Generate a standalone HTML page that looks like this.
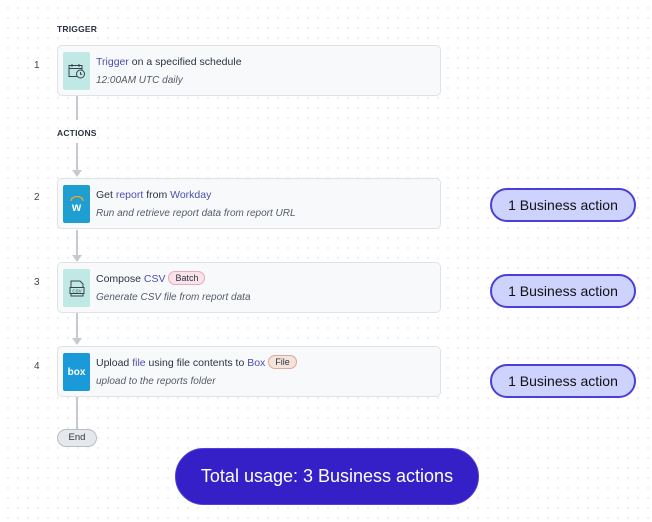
<!DOCTYPE html>
<html><head><meta charset="utf-8"><style>
*{margin:0;padding:0;box-sizing:border-box}
body{width:652px;height:522px;position:relative;overflow:hidden;background-color:#fff;background-image:radial-gradient(circle,#e8eaee 0.8px,transparent 1.1px);background-size:10px 10px;background-position:3px 3px;font-family:"Liberation Sans",sans-serif;color:#2b3340}
.lbl{position:absolute;left:57px;font-size:8.5px;font-weight:bold;letter-spacing:.2px;color:#2b3340}
.num{position:absolute;left:34px;font-size:10px;color:#444}
.card{position:absolute;left:57px;width:384px;height:51px;background:#f8f9fb;border:1px solid #dfe2e7;border-radius:5px}
.ic{position:absolute;left:5px;top:6px;width:27px;height:38px;border-radius:2px;display:flex;align-items:center;justify-content:center}
.t1{position:absolute;left:38px;top:10px;font-size:10.5px;color:#2b3340;white-space:nowrap}
.t2{position:absolute;left:38px;top:29px;font-size:10px;font-style:italic;color:#555c66;white-space:nowrap}
.b{color:#4a4fb0}
.tag{display:inline-block;font-size:9px;padding:1px 6px;border-radius:9px;margin-left:3px;vertical-align:1px}
.line{position:absolute;left:76px;width:1.5px;background:#c6cad0}
.arr{position:absolute;left:72px;width:0;height:0;border-left:5px solid transparent;border-right:5px solid transparent;border-top:7px solid #c6cad0}
.ba{position:absolute;left:490px;width:146px;height:34px;border:2px solid #4a3fd6;background:#cdd3fd;border-radius:17px;font-size:14px;color:#111;text-align:center;line-height:30px}
</style></head><body>
<div class="lbl" style="top:24px">TRIGGER</div>
<div class="num" style="top:60px">1</div>
<div class="card" style="top:45px"><div class="ic" style="background:#c0e9e6">
<svg width="18" height="16" viewBox="0 0 18 16" fill="none" stroke="#3a4150" stroke-width="1"><rect x="1" y="2.5" width="13" height="11"/><path d="M1 5.5h13M4 1v3M11 1v3"/><circle cx="12.5" cy="11" r="4" fill="#c0e9e6"/><path d="M12.5 9v2.2h1.6"/></svg></div>
<div class="t1"><span class="b">Trigger</span> on a specified schedule</div><div class="t2">12:00AM UTC daily</div></div>
<div class="line" style="top:96px;height:24px"></div>
<div class="lbl" style="top:128px">ACTIONS</div>
<div class="line" style="top:143px;height:28px"></div><div class="arr" style="top:170px"></div>
<div class="num" style="top:192px">2</div>
<div class="card" style="top:178px"><div class="ic" style="background:#1f9ed2;flex-direction:column">
<svg width="14" height="5" viewBox="0 0 14 5"><path d="M1 5A6 4.5 0 0 1 13 5" fill="none" stroke="#f5a623" stroke-width="1.3"/></svg>
<span style="color:#fff;font-size:12px;font-weight:bold;line-height:12px">w</span></div>
<div class="t1">Get <span class="b">report</span> from <span class="b">Workday</span></div><div class="t2">Run and retrieve report data from report URL</div></div>
<div class="line" style="top:230px;height:25px"></div><div class="arr" style="top:255px"></div>
<div class="num" style="top:277px">3</div>
<div class="card" style="top:262px"><div class="ic" style="background:#c0e9e6">
<svg width="16" height="17" viewBox="0 0 16 17" fill="none" stroke="#3a4150" stroke-width="1"><path d="M2 7V1h9l3 3v3M2 14v2h12v-2"/><rect x="1" y="7.5" width="14" height="6"/><text x="8" y="12.3" font-size="4.5" text-anchor="middle" fill="#3a4150" stroke="none" font-family="Liberation Sans">CSV</text></svg></div>
<div class="t1" style="top:8px">Compose <span class="b">CSV</span><span class="tag" style="background:#fbe3ea;border:1px solid #e8a9bd">Batch</span></div><div class="t2">Generate CSV file from report data</div></div>
<div class="line" style="top:313px;height:27px"></div><div class="arr" style="top:338px"></div>
<div class="num" style="top:361px">4</div>
<div class="card" style="top:346px"><div class="ic" style="background:#1a9ad8"><span style="color:#fff;font-size:10px;font-weight:bold">box</span></div>
<div class="t1" style="top:8px">Upload <span class="b">file</span> using file contents to <span class="b">Box</span><span class="tag" style="background:#f6e3dc;border:1px solid #d9ab98">File</span></div><div class="t2">upload to the reports folder</div></div>
<div class="line" style="top:397px;height:32px"></div>
<div style="position:absolute;left:57px;top:429px;width:40px;height:18px;background:#e5e8ec;border:1px solid #b8bdc4;border-radius:9px;font-size:9.5px;text-align:center;line-height:16px;color:#333">End</div>
<div class="ba" style="top:188px">1 Business action</div>
<div class="ba" style="top:274px">1 Business action</div>
<div class="ba" style="top:364px">1 Business action</div>
<div style="position:absolute;left:175px;top:448px;width:304px;height:57px;background:#3520c8;border:1.5px solid #4f3fdc;border-radius:29px;color:#fff;font-size:18px;text-align:center;line-height:54px">Total usage: 3 Business actions</div>
</body></html>
